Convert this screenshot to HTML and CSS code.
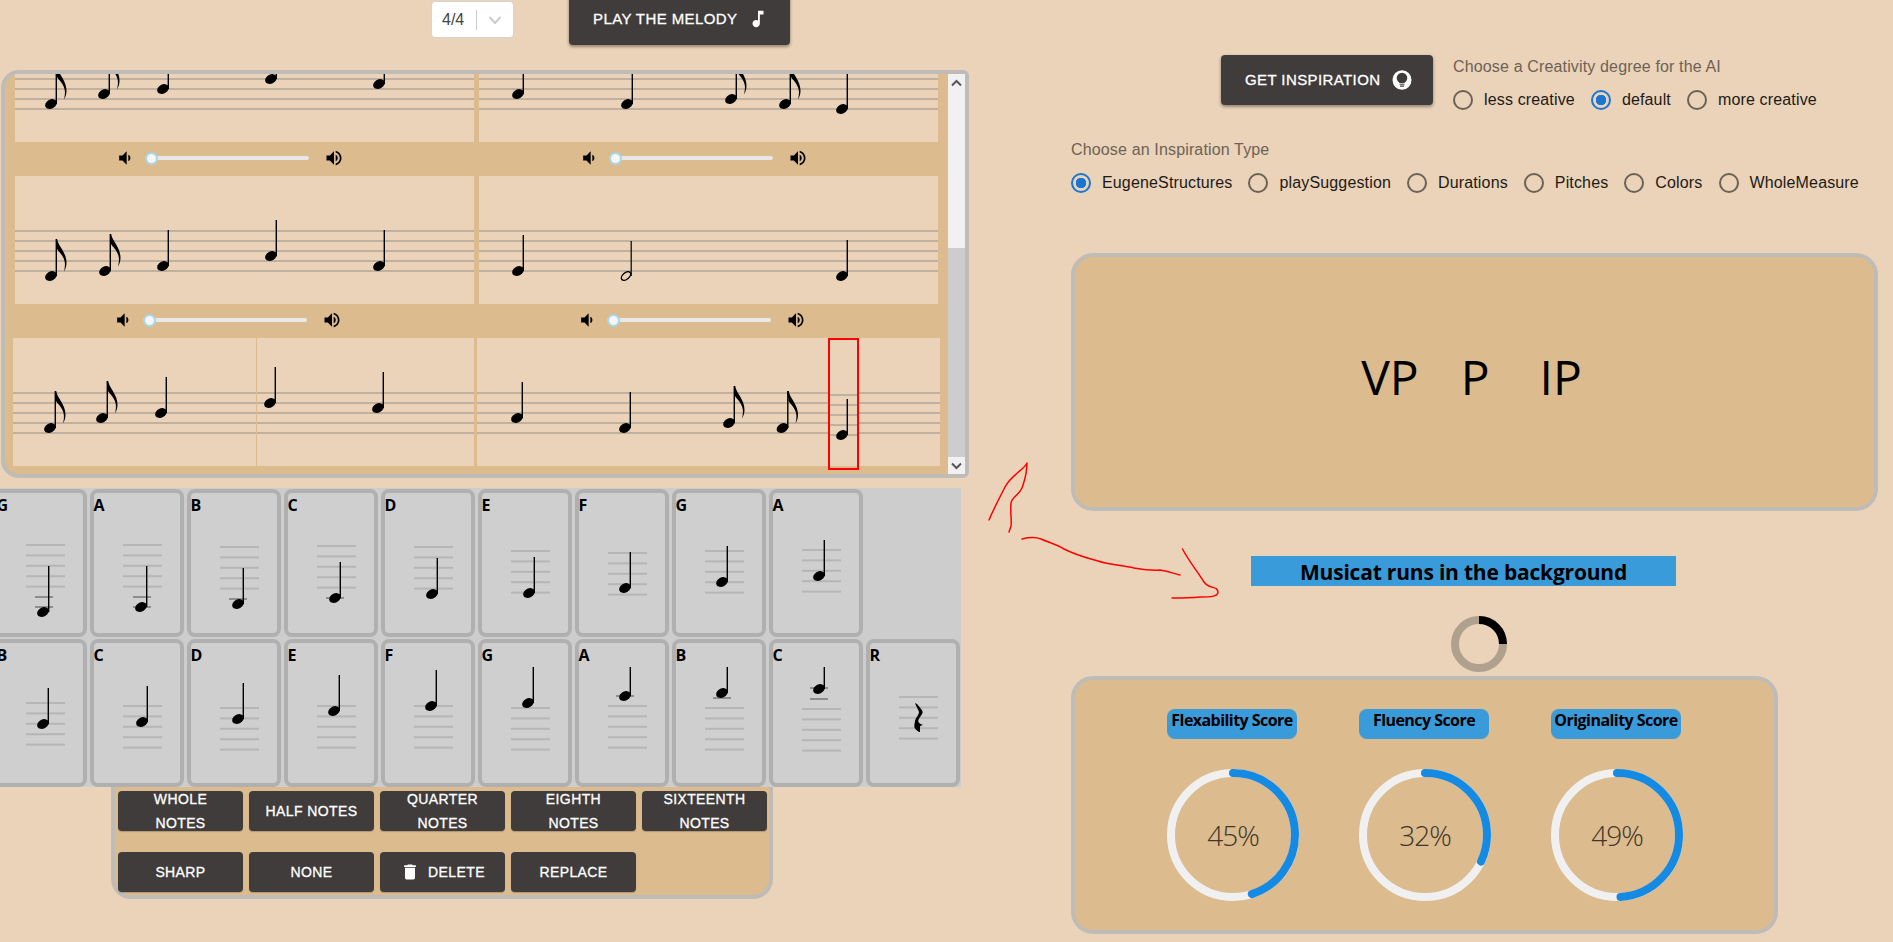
FILE: index.html
```html
<!DOCTYPE html>
<html lang="en">
<head>
<meta charset="utf-8">
<title>Musicat</title>
<link rel="stylesheet" href="styles.css">
</head>
<body>
<svg class="defs" width="0" height="0" aria-hidden="true">
  <defs>
    <g id="head"><ellipse rx="6.2" ry="4.5" transform="rotate(-28)"/></g>
    <g id="q"><use href="#head"/><rect x="4.6" y="-36" width="1.4" height="36"/></g>
    <g id="e"><use href="#head"/><rect x="4.6" y="-37" width="1.4" height="37"/><path d="M5,-37 L6.2,-37 C7,-30 15.5,-24 15.5,-13 C15.5,-10 14.5,-7 13,-4.5 C14,-9 14.3,-12 13.5,-15 C12.5,-20 8,-24 6,-27 Z"/></g>
    <g id="h"><ellipse rx="5.4" ry="3.2" transform="rotate(-40)" fill="none" stroke="#000" stroke-width="1.4"/><rect x="4.6" y="-35" width="1.2" height="35"/></g>
    <g id="staff">
      <rect y="54" width="100%" height="2"/><rect y="64" width="100%" height="2"/><rect y="74" width="100%" height="2"/><rect y="84" width="100%" height="2"/><rect y="94" width="100%" height="2"/>
    </g>
    <g id="ms">
      <rect x="29" y="-1" width="39" height="2"/><rect x="29" y="9.4" width="39" height="2"/><rect x="29" y="19.8" width="39" height="2"/><rect x="29" y="30.2" width="39" height="2"/><rect x="29" y="40.6" width="39" height="2"/>
    </g>
    <path id="vol-low" d="M18.5 12c0-1.77-1.02-3.29-2.5-4.03v8.05c1.48-.73 2.5-2.25 2.5-4.02zM5 9v6h4l5 5V4L9 9H5z"/>
    <path id="vol-high" d="M3 9v6h4l5 5V4L7 9H3zm13.5 3c0-1.77-1.02-3.29-2.5-4.03v8.05c1.48-.73 2.5-2.25 2.5-4.02zM14 3.23v2.06c2.89.86 5 3.54 5 6.71s-2.11 5.85-5 6.71v2.06c4.01-.91 7-4.49 7-8.77s-2.99-7.86-7-8.77z"/>
  </defs>
</svg>

<main class="app">
  <section class="left">
    <header class="toolbar">
      <div class="select">
        <span class="select-value">4/4</span>
        <span class="select-sep"></span>
        <svg class="select-chev" width="14" height="10" viewBox="0 0 14 10"><path d="M1.5 2 L7 8 L12.5 2" fill="none" stroke="#ccc" stroke-width="2"/></svg>
      </div>
      <button class="btn btn-raised btn-play">Play the melody
        <svg width="22" height="22" viewBox="0 0 24 24" fill="#fff"><path d="M12 3v10.55c-.59-.34-1.27-.55-2-.55-2.21 0-4 1.79-4 4s1.79 4 4 4 4-1.79 4-4V7h4V3h-6z"/></svg>
      </button>
    </header>

    <div class="score-panel">
      <div class="score-scroll">
        <div class="score-content">
          <div class="measures">
            <svg class="measure" width="459" height="128">
              <use class="staff-lines" href="#staff"/>
              <use href="#e" x="36" y="90"/><use href="#e" x="89" y="80"/><use href="#q" x="148" y="75"/><use href="#q" x="256" y="65"/><use href="#q" x="364" y="70"/>
            </svg>
            <svg class="measure" width="459" height="128">
              <use class="staff-lines" href="#staff"/>
              <use href="#q" x="39" y="80"/><use href="#q" x="148" y="90"/><use href="#e" x="252" y="85"/><use href="#e" x="306" y="90"/><use href="#q" x="363" y="95"/>
            </svg>
          </div>
          <div class="bands">
            <div class="band">
              <svg width="20" height="20" viewBox="0 0 24 24"><use href="#vol-low"/></svg>
              <div class="slider"><span class="slider-thumb"></span></div>
              <svg width="20" height="20" viewBox="0 0 24 24"><use href="#vol-high"/></svg>
            </div>
            <div class="band">
              <svg width="20" height="20" viewBox="0 0 24 24"><use href="#vol-low"/></svg>
              <div class="slider"><span class="slider-thumb"></span></div>
              <svg width="20" height="20" viewBox="0 0 24 24"><use href="#vol-high"/></svg>
            </div>
          </div>
          <div class="measures">
            <svg class="measure" width="459" height="128">
              <use class="staff-lines" href="#staff"/>
              <use href="#e" x="36" y="100"/><use href="#e" x="90" y="95"/><use href="#q" x="148" y="90"/><use href="#q" x="256" y="80"/><use href="#q" x="364" y="90"/>
            </svg>
            <svg class="measure" width="459" height="128">
              <use class="staff-lines" href="#staff"/>
              <use href="#q" x="39" y="95"/><use href="#h" x="147" y="100"/><use href="#q" x="363" y="100"/>
            </svg>
          </div>
          <div class="bands bands-wide">
            <div class="band">
              <svg width="20" height="20" viewBox="0 0 24 24"><use href="#vol-low"/></svg>
              <div class="slider"><span class="slider-thumb"></span></div>
              <svg width="20" height="20" viewBox="0 0 24 24"><use href="#vol-high"/></svg>
            </div>
            <div class="band">
              <svg width="20" height="20" viewBox="0 0 24 24"><use href="#vol-low"/></svg>
              <div class="slider"><span class="slider-thumb"></span></div>
              <svg width="20" height="20" viewBox="0 0 24 24"><use href="#vol-high"/></svg>
            </div>
          </div>
          <div class="measures measures-wide">
            <svg class="measure" width="461" height="128">
              <use class="staff-lines" href="#staff"/>
              <rect class="barline" x="243" y="0" width="1" height="128"/>
              <use href="#e" x="37" y="90"/><use href="#e" x="89" y="80"/><use href="#q" x="148" y="75"/><use href="#q" x="257" y="65"/><use href="#q" x="365" y="70"/>
            </svg>
            <div class="measure-wrap">
              <svg class="measure" width="463" height="128">
                <use class="staff-lines" href="#staff"/>
                <rect class="erase" x="351" y="50" width="31" height="50"/>
                <g class="staff-lines"><rect x="351" y="56" width="31" height="2"/><rect x="351" y="66" width="31" height="2"/><rect x="351" y="76" width="31" height="2"/><rect x="351" y="86" width="31" height="2"/><rect x="351" y="96" width="31" height="2"/></g>
                <use href="#q" x="40" y="80"/><use href="#q" x="148" y="90"/><use href="#e" x="252" y="85"/><use href="#e" x="305.500" y="90"/><use href="#q" x="365" y="97"/>
              </svg>
              <div class="note-cursor"></div>
            </div>
          </div>
        </div>
      </div>
      <div class="scrollbar">
        <span class="scroll-btn"><svg width="11" height="8" viewBox="0 0 11 8"><path d="M1 6.500 L5.500 2 L10 6.500" fill="none" stroke="#555" stroke-width="2"/></svg></span>
        <span class="scroll-thumb"></span>
        <span class="scroll-track"></span>
        <span class="scroll-btn scroll-btn-down"><svg width="11" height="8" viewBox="0 0 11 8"><path d="M1 1.500 L5.500 6 L10 1.500" fill="none" stroke="#555" stroke-width="2"/></svg></span>
      </div>
    </div>

    <div class="palette">
      <div class="palette-row">
        <div class="card"><span class="card-letter">G</span><svg class="card-art" width="86" height="116"><use class="mini-lines" href="#ms" y="28"/><rect class="ledger" x="38" y="79" width="18" height="2"/><rect class="ledger" x="38" y="89" width="18" height="2"/><use href="#head" x="46" y="95"/><rect x="51" y="49" width="1.400" height="46"/></svg></div>
        <div class="card"><span class="card-letter">A</span><svg class="card-art" width="86" height="116"><use class="mini-lines" href="#ms" y="28"/><rect class="ledger" x="39" y="79" width="18" height="2"/><rect class="ledger" x="39" y="89" width="18" height="2"/><use href="#head" x="47" y="90"/><rect x="52" y="49" width="1.400" height="41"/></svg></div>
        <div class="card"><span class="card-letter">B</span><svg class="card-art" width="86" height="116"><use class="mini-lines" href="#ms" y="30"/><rect class="ledger" x="38" y="81" width="18" height="2"/><use href="#q" x="47" y="87"/></svg></div>
        <div class="card"><span class="card-letter">C</span><svg class="card-art" width="86" height="116"><use class="mini-lines" href="#ms" y="29"/><rect class="ledger" x="38" y="80" width="18" height="2"/><use href="#q" x="47" y="81"/></svg></div>
        <div class="card"><span class="card-letter">D</span><svg class="card-art" width="86" height="116"><use class="mini-lines" href="#ms" y="30"/><use href="#q" x="47" y="77"/></svg></div>
        <div class="card"><span class="card-letter">E</span><svg class="card-art" width="86" height="116"><use class="mini-lines" href="#ms" y="34"/><use href="#q" x="47" y="76"/></svg></div>
        <div class="card"><span class="card-letter">F</span><svg class="card-art" width="86" height="116"><use class="mini-lines" href="#ms" y="36"/><use href="#q" x="46" y="71"/></svg></div>
        <div class="card"><span class="card-letter">G</span><svg class="card-art" width="86" height="116"><use class="mini-lines" href="#ms" y="34"/><use href="#q" x="46" y="65"/></svg></div>
        <div class="card"><span class="card-letter">A</span><svg class="card-art" width="86" height="116"><use class="mini-lines" href="#ms" y="33"/><use href="#q" x="46" y="59"/></svg></div>
      </div>
      <div class="palette-row">
        <div class="card"><span class="card-letter">B</span><svg class="card-art" width="86" height="116"><use class="mini-lines" href="#ms" y="36"/><use href="#q" x="46" y="57"/></svg></div>
        <div class="card"><span class="card-letter">C</span><svg class="card-art" width="86" height="116"><use class="mini-lines" href="#ms" y="39"/><use href="#q" x="48" y="55"/></svg></div>
        <div class="card"><span class="card-letter">D</span><svg class="card-art" width="86" height="116"><use class="mini-lines" href="#ms" y="41"/><use href="#q" x="47" y="52"/></svg></div>
        <div class="card"><span class="card-letter">E</span><svg class="card-art" width="86" height="116"><use class="mini-lines" href="#ms" y="39"/><use href="#q" x="46" y="44"/></svg></div>
        <div class="card"><span class="card-letter">F</span><svg class="card-art" width="86" height="116"><use class="mini-lines" href="#ms" y="39"/><use href="#q" x="46" y="39"/></svg></div>
        <div class="card"><span class="card-letter">G</span><svg class="card-art" width="86" height="116"><use class="mini-lines" href="#ms" y="41"/><use href="#q" x="46" y="36"/></svg></div>
        <div class="card"><span class="card-letter">A</span><svg class="card-art" width="86" height="116"><use class="mini-lines" href="#ms" y="39"/><rect class="ledger" x="37" y="28" width="18" height="2"/><use href="#q" x="46" y="29"/></svg></div>
        <div class="card"><span class="card-letter">B</span><svg class="card-art" width="86" height="116"><use class="mini-lines" href="#ms" y="41"/><rect class="ledger" x="37" y="30" width="18" height="2"/><use href="#q" x="46" y="26"/></svg></div>
        <div class="card"><span class="card-letter">C</span><svg class="card-art" width="86" height="116"><use class="mini-lines" href="#ms" y="42"/><rect class="ledger" x="37" y="20" width="18" height="2"/><rect class="ledger" x="37" y="31" width="18" height="2"/><use href="#q" x="46" y="22"/></svg></div>
        <div class="card"><span class="card-letter">R</span><svg class="card-art" width="86" height="116"><use class="mini-lines" href="#ms" y="30"/><path d="M45 36 L47 37 C49 40 52 42 52.7 45 C52 49 48 51 48.300 54.700 C49 56 51 57.500 53.300 58 C51 58 50 59 50 60 C50 62 50 63 50 65 L49 65 C46 63 44 61 44.300 59 C44.500 56 45 55 45 54 C46 50 49 48 49 45 C48 42 46 39 45 36 Z"/></svg></div>
      </div>
    </div>

    <div class="actions">
      <button class="btn btn-action">Whole Notes</button>
      <button class="btn btn-action">Half Notes</button>
      <button class="btn btn-action">Quarter Notes</button>
      <button class="btn btn-action">Eighth Notes</button>
      <button class="btn btn-action">Sixteenth Notes</button>
      <button class="btn btn-action">Sharp</button>
      <button class="btn btn-action">None</button>
      <button class="btn btn-action"><svg class="trash" width="20" height="20" viewBox="0 0 24 24" fill="#fff"><path d="M6 19c0 1.100.9 2 2 2h8c1.100 0 2-.9 2-2V7H6v12zM19 4h-3.500l-1-1h-5l-1 1H5v2h14V4z"/></svg>Delete</button>
      <button class="btn btn-action">Replace</button>
    </div>
  </section>

  <section class="right">
    <div class="inspire-row">
      <button class="btn btn-raised btn-inspire">Get inspiration
        <svg width="20" height="20" viewBox="0 0 20 20"><ellipse cx="10" cy="10" rx="9.500" ry="9.800" fill="#fff"/><circle cx="10" cy="8" r="5.300" fill="#403c3b"/><rect x="7.500" y="12" width="5" height="3" fill="#403c3b"/><rect x="7" y="13.300" width="6" height="1" fill="#fff"/><rect x="8" y="15.500" width="4" height="1.200" fill="#403c3b"/></svg>
      </button>
      <div class="field">
        <p class="field-label">Choose a Creativity degree for the AI</p>
        <div class="radio-row">
          <label class="radio"><span class="radio-mark"></span>less creative</label>
          <label class="radio"><span class="radio-mark radio-mark-on"></span>default</label>
          <label class="radio"><span class="radio-mark"></span>more creative</label>
        </div>
      </div>
    </div>
    <div class="field field-type">
      <p class="field-label">Choose an Inspiration Type</p>
      <div class="radio-row">
        <label class="radio"><span class="radio-mark radio-mark-on"></span>EugeneStructures</label>
        <label class="radio"><span class="radio-mark"></span>playSuggestion</label>
        <label class="radio"><span class="radio-mark"></span>Durations</label>
        <label class="radio"><span class="radio-mark"></span>Pitches</label>
        <label class="radio"><span class="radio-mark"></span>Colors</label>
        <label class="radio"><span class="radio-mark"></span>WholeMeasure</label>
      </div>
    </div>

    <div class="vp-box"><span class="vp-first">VP</span><span>P</span><span>IP</span></div>

    <h2 class="status">Musicat runs in the background</h2>
    <svg class="spinner" width="56" height="56" viewBox="0 0 56 56"><circle cx="28" cy="28" r="24" fill="none" stroke="#b0a08e" stroke-width="8"/><path d="M28 4 A24 24 0 0 1 52 28" fill="none" stroke="#000" stroke-width="8"/></svg>

    <div class="scores">
      <div class="score-col">
        <div class="score-label">Flexability Score</div>
        <svg class="gauge" width="132" height="132" viewBox="0 0 132 132"><circle class="gauge-track" cx="66" cy="66" r="62"/><circle class="gauge-value" cx="66" cy="66" r="62" stroke-dasharray="175.300 389.560" transform="rotate(-90 66 66)"/><text class="gauge-text" x="66" y="77" text-anchor="middle">45%</text></svg>
      </div>
      <div class="score-col">
        <div class="score-label">Fluency Score</div>
        <svg class="gauge" width="132" height="132" viewBox="0 0 132 132"><circle class="gauge-track" cx="66" cy="66" r="62"/><circle class="gauge-value" cx="66" cy="66" r="62" stroke-dasharray="124.660 389.560" transform="rotate(-90 66 66)"/><text class="gauge-text" x="66" y="77" text-anchor="middle">32%</text></svg>
      </div>
      <div class="score-col">
        <div class="score-label">Originality Score</div>
        <svg class="gauge" width="132" height="132" viewBox="0 0 132 132"><circle class="gauge-track" cx="66" cy="66" r="62"/><circle class="gauge-value" cx="66" cy="66" r="62" stroke-dasharray="190.880 389.560" transform="rotate(-90 66 66)"/><text class="gauge-text" x="66" y="77" text-anchor="middle">49%</text></svg>
      </div>
    </div>
  </section>
</main>

<svg class="scribble" width="1893" height="942" viewBox="0 0 1893 942" aria-hidden="true">
  <path d="M989 520 C994 508 1000 497 1005 487 C1011 475 1024 470 1027 463 C1027 475 1024 482 1022 488 C1019 495 1012 497 1011 503 C1010 512 1012 522 1011 526 L1009 532"/>
  <path d="M1022 539 C1030 537 1036 537 1041 539 C1050 543 1056 544 1064 549 C1078 556 1088 558 1098 561 C1110 565 1122 565 1134 568 C1146 570 1152 571 1160 570 C1168 571 1174 574 1180 575"/>
  <path d="M1182.500 549 C1190 563 1198 572 1204 582 C1210 590 1217 585 1218 592 C1218 597 1210 597 1200 597 C1190 598 1180 598 1172 598"/>
</svg>
</body>
</html>
```
FILE: styles.css
```css
* { box-sizing: border-box; }
html, body { margin: 0; padding: 0; }
body {
  width: 1893px;
  height: 942px;
  overflow: hidden;
  position: relative;
  background: #ead3b9;
  font-family: "Liberation Sans", Arial, sans-serif;
  color: #1d1a16;
}
.defs { position: absolute; }
.app { display: flex; align-items: flex-start; }
.left { width: 969px; flex: none; }
.right { flex: 1; padding: 55px 0 0 102px; min-width: 0; }

/* toolbar */
.toolbar {
  height: 70px;
  display: flex;
  align-items: flex-start;
  gap: 55px;
  padding: 1px 0 0 431px;
}
.select {
  width: 83px;
  height: 37px;
  background: #fff;
  border: 1px solid #d8d2cc;
  border-radius: 4px;
  display: flex;
  align-items: center;
  padding-left: 10px;
  color: #444;
  font-size: 16px;
}
.select-value { width: 34px; }
.select-sep { width: 1px; height: 20px; background: #ccc; }
.select-chev { margin-left: 11px; }

.btn {
  border: 0;
  background: #403c3b;
  color: #fff;
  font-family: "Liberation Sans", Arial, sans-serif;
  font-weight: 400;
  font-size: 14px;
  letter-spacing: 0.4px;
  line-height: 24px;
  text-transform: uppercase;
  border-radius: 4px;
  padding: 0;
  -webkit-text-stroke: 0.3px #fff;
}
.btn-raised {
  display: flex;
  align-items: center;
  font-size: 15px;
  box-shadow: 0 2px 3px rgba(0,0,0,.28), 0 1px 4px rgba(0,0,0,.14);
}
.btn-play {
  width: 221px;
  height: 52px;
  margin-top: -8px;
  padding: 0 0 0 24px;
  gap: 10px;
}
.btn-inspire {
  width: 212px;
  height: 50px;
  flex: none;
  padding-left: 24px;
  gap: 12px;
}

/* score panel */
.score-panel {
  margin-left: 1px;
  width: 968px;
  height: 408px;
  display: flex;
  background: #dcbb8e;
  border: 4px solid #bfbcb8;
  border-radius: 18px 6px 6px 18px;
}
.score-scroll { width: 943px; height: 400px; overflow: hidden; }
.score-content { margin-top: -60px; padding-left: 10px; }
.measures { display: flex; gap: 5px; height: 128px; }
.measures-wide { margin-left: -2px; gap: 3px; }
.measure { display: block; background: #ead3b9; }
.staff-lines { fill: #bfb09f; }
.barline { fill: #dcbb8e; }
.erase { fill: #ead3b9; }
.measure-wrap { position: relative; }
.note-cursor {
  position: absolute;
  left: 351px;
  top: 0;
  width: 31px;
  height: 132px;
  border: 2px solid #f00;
}
.bands { display: flex; gap: 5px; height: 34px; }
.bands-wide { margin-left: -2px; }
.band {
  width: 459px;
  display: flex;
  align-items: center;
  gap: 10px;
  padding: 0 0 2px 100px;
}
.slider {
  position: relative;
  width: 164px;
  height: 4px;
  border-radius: 2px;
  background: #e8e8e8;
  margin-right: 5px;
}
.slider-thumb {
  position: absolute;
  left: 0;
  top: -4.500px;
  width: 13px;
  height: 13px;
  border-radius: 50%;
  background: #f6f6f6;
  border: 2px solid #a8d6e8;
}
.scrollbar {
  width: 17px;
  height: 400px;
  display: flex;
  flex-direction: column;
  background: #cdcdcd;
}
.scroll-btn {
  height: 17px;
  background: #f1f1f1;
  display: flex;
  align-items: center;
  justify-content: center;
  flex: none;
}
.scroll-thumb { height: 157px; background: #f1f1f1; flex: none; }
.scroll-track { flex: 1; }

/* palette */
.palette {
  margin-top: 10px;
  width: 961px;
  height: 299px;
  background: #cdcdcd;
  display: flex;
  flex-direction: column;
  gap: 2px;
  padding-top: 1px;
  overflow: hidden;
}
.palette-row { display: flex; gap: 3px; margin-left: -7.500px; height: 148px; }
.card {
  width: 94px;
  height: 148px;
  flex: none;
  border: 4px solid #b0b0b0;
  border-radius: 8px;
  background: #cfcfcf;
}
.card-letter {
  display: block;
  height: 24px;
  font-family: "Open Sans", sans-serif;
  font-weight: 700;
  font-size: 16px;
  line-height: 24px;
  color: #000;
}
.card-art { display: block; }
.mini-lines { fill: #b6b6b6; }
.ledger { fill: #8e8e8e; }

/* action buttons */
.actions {
  margin-left: 111px;
  width: 662px;
  height: 112px;
  background: #dcbb8e;
  border: 4px solid #bfbcb8;
  border-top: 0;
  border-radius: 0 0 20px 20px;
  padding: 4px 0 0 3px;
  display: grid;
  grid-template-columns: repeat(5, 125px);
  grid-auto-rows: 40px;
  column-gap: 6px;
  row-gap: 21px;
}
.btn-action {
  padding: 0 14px;
  display: flex;
  align-items: center;
  justify-content: center;
  text-align: center;
  box-shadow: 0 1px 1px rgba(0,0,0,.2);
}
.trash { margin-right: 8px; }

/* right column */
.inspire-row { display: flex; gap: 20px; padding-left: 150px; height: 50px; }
.field { margin-top: 1px; }
.field-label {
  margin: 0;
  font-size: 16px;
  letter-spacing: 0.15px;
  line-height: 22px;
  color: #6d6255;
}
.radio-row { display: flex; margin-top: 10px; height: 24px; }
.radio {
  display: flex;
  align-items: center;
  font-size: 16px;
  letter-spacing: 0.15px;
  margin-right: 16px;
  white-space: nowrap;
  color: #1d1a16;
}
.radio-mark {
  width: 20px;
  height: 20px;
  border-radius: 50%;
  border: 2px solid #6b6257;
  margin-right: 11px;
  flex: none;
}
.radio-mark-on {
  border-color: #1976d2;
  background: radial-gradient(circle, #1976d2 0 5px, transparent 5.500px);
}
.field-type { margin-top: 34px; }

.vp-box {
  margin-top: 58px;
  width: 807px;
  height: 258px;
  background: #dcbb8e;
  border: 4px solid #bfbcb8;
  border-radius: 22px;
  display: flex;
  align-items: center;
  justify-content: center;
  gap: 50px;
  padding: 0 6px 12px 0;
  font-family: "Open Sans", sans-serif;
  font-size: 48px;
  color: #000;
}
.vp-first { margin-right: -8px; }
.status {
  margin: 45px 0 0 180px;
  width: 425px;
  height: 30px;
  background: #3a9bdb;
  font-family: "Open Sans", sans-serif;
  font-weight: 700;
  font-size: 21px;
  letter-spacing: -0.2px;
  line-height: 32px;
  text-align: center;
  color: #000;
}
.spinner { display: block; margin: 30px 0 0 380px; }
.scores {
  margin-top: 4px;
  width: 707px;
  height: 258px;
  background: #dcbb8e;
  border: 4px solid #bfbcb8;
  border-radius: 22px;
  display: flex;
  gap: 60px;
  padding: 29px 0 0 92px;
}
.score-col { width: 132px; }
.score-label {
  width: 130px;
  height: 30px;
  background: #3a9bdb;
  border-radius: 8px;
  font-family: "Open Sans", sans-serif;
  font-weight: 700;
  font-size: 16px;
  letter-spacing: -0.55px;
  line-height: 23px;
  text-align: center;
  white-space: nowrap;
  color: #000;
}
.gauge { display: block; margin-top: 30px; }
.gauge-track { fill: none; stroke: #f0f0f0; stroke-width: 8; }
.gauge-value { fill: none; stroke: #158ae3; stroke-width: 8; stroke-linecap: round; }
.gauge-text { font-family: "Open Sans", sans-serif; font-weight: 300; font-size: 28px; letter-spacing: -1px; fill: #3f362c; }

.scribble { position: absolute; left: 0; top: 0; pointer-events: none; }
.scribble path { fill: none; stroke: #f00; stroke-width: 1.500; stroke-linecap: round; stroke-linejoin: round; }
```
